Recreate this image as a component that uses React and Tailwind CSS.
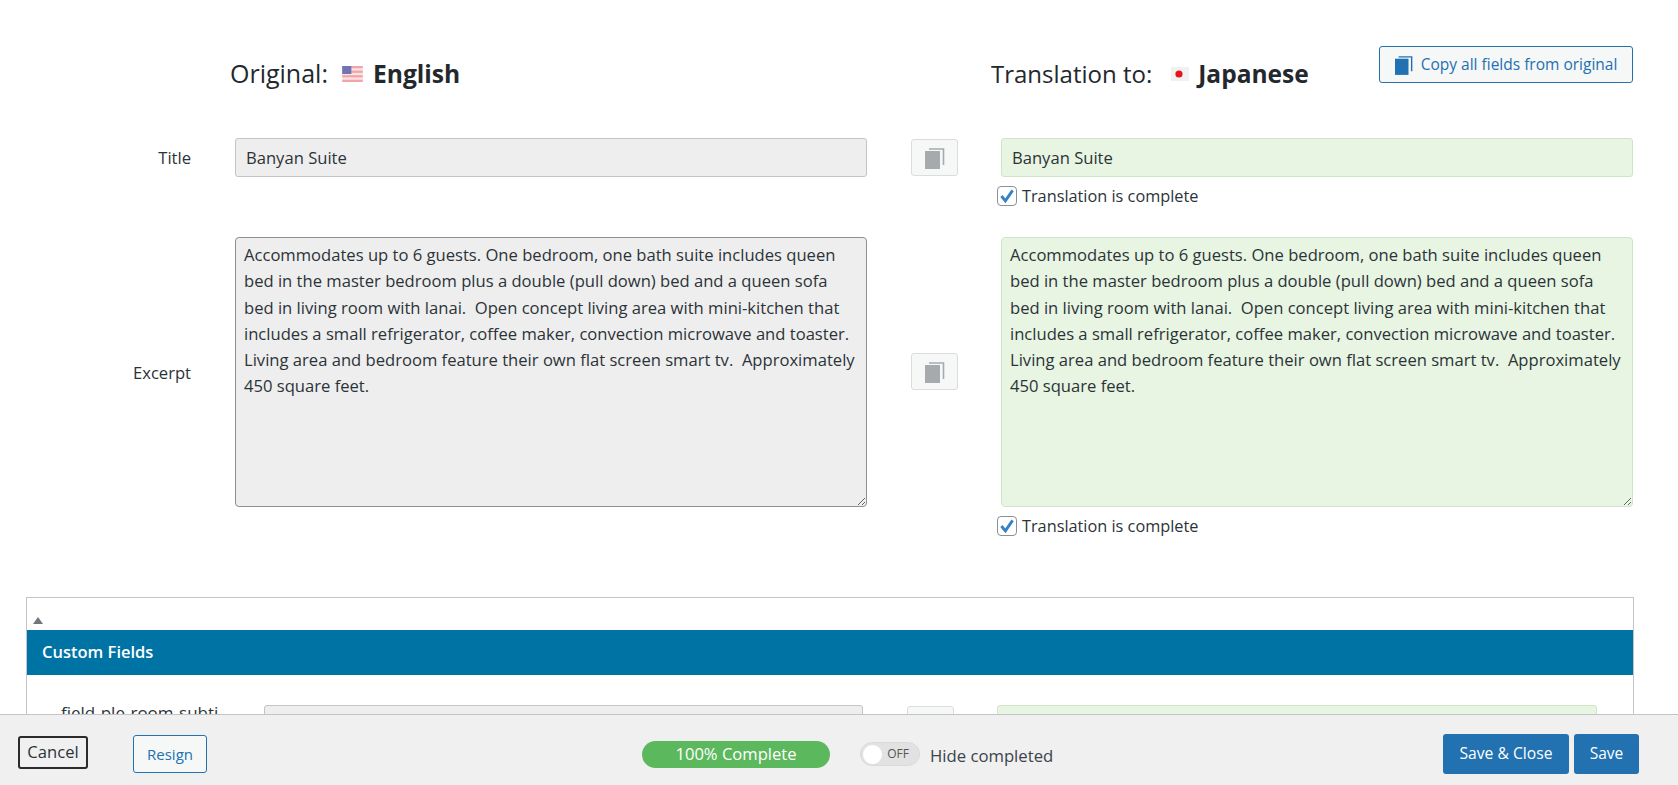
import React from "react";

const excerpt =
  "Accommodates up to 6 guests. One bedroom, one bath suite includes queen bed in the master bedroom plus a double (pull down) bed and a queen sofa bed in living room with lanai.  Open concept living area with mini-kitchen that includes a small refrigerator, coffee maker, convection microwave and toaster. Living area and bedroom feature their own flat screen smart tv.  Approximately 450 square feet.";

const CopyIcon = ({ color = "#a7aaad", className = "w-[20px] h-[22px]" }) => (
  <svg viewBox="0 0 20 22" className={className}>
    <rect x="0" y="4" width="15" height="18" fill={color} />
    <path d="M4 2 H18.5 V18" fill="none" stroke={color} strokeWidth="1.6" />
  </svg>
);

const UsFlag = () => (
  <svg viewBox="0 0 18 14" className="w-[25px] h-[16px]">
    <rect width="18" height="14" fill="#fbe3e3" />
    <rect y="0" width="18" height="2" fill="#f2a5a9" />
    <rect y="4" width="18" height="2" fill="#f2a5a9" />
    <rect y="8" width="18" height="2" fill="#f2a5a9" />
    <rect y="12" width="18" height="2" fill="#f2a5a9" />
    <rect width="8" height="7" fill="#6f74b4" />
  </svg>
);

const JpFlag = () => (
  <svg viewBox="0 0 18 14" className="w-[18px] h-[14px]">
    <rect width="18" height="14" fill="#f1f1f1" />
    <circle cx="8" cy="7" r="3.6" fill="#e8131b" />
  </svg>
);

const CompleteCheck = () => (
  <label className="flex items-center gap-[5px] text-[16.3px] leading-[22px] text-[#2c3338]">
    <span className="flex h-[20px] w-[20px] items-center justify-center rounded-[4px] border border-[#8c8f94] bg-white">
      <svg viewBox="0 0 20 20" className="w-[16px] h-[18px]">
        <path d="M3 10 L8 16 L17 3" fill="none" stroke="#3582c4" strokeWidth="3.6" />
      </svg>
    </span>
    Translation is complete
  </label>
);

const CopyButton = () => (
  <button className="flex h-[37px] w-[47px] items-center justify-center rounded-[3px] border border-[#dcdcde] bg-[#f6f7f7]">
    <CopyIcon />
  </button>
);

const App = () => {
  return (
    <div className="relative h-[785px] overflow-hidden bg-white text-[#2c3338] font-['Open_Sans','Noto_Sans',sans-serif]">
      {/* header row */}
      <div className="flex h-[138px] pl-[230px]">
        <h2 className="mt-[56px] flex h-[36px] w-[761px] items-center text-[25px] text-[#23282d]">
          <span>Original:</span>
          <span className="ml-[12px] mr-[8px] flex"><UsFlag /></span>
          <strong className="text-[24.6px] font-bold">English</strong>
        </h2>
        <h2 className="mt-[56px] flex h-[36px] w-[388px] items-center text-[24px] text-[#23282d]">
          <span>Translation to:</span>
          <span className="ml-[19px] mr-[9px] flex"><JpFlag /></span>
          <strong className="text-[24.5px] font-bold">Japanese</strong>
        </h2>
        <button className="mt-[46px] flex h-[37px] w-[254px] items-center justify-center gap-[8px] rounded-[3px] border border-[#2271b1] bg-[#f6f7f7] text-[15.5px] text-[#2271b1]">
          <CopyIcon color="#2271b1" className="w-[18px] h-[22px]" />
          Copy all fields from original
        </button>
      </div>

      {/* title */}
      <div className="flex h-[99px] items-start">
        <div className="w-[191px] pt-[8px] text-right text-[16.6px]">Title</div>
        <input
          readOnly
          value="Banyan Suite"
          className="ml-[44px] h-[39px] w-[632px] rounded-[3px] border border-[#c3c4c7] bg-[#eeeeee] px-[10px] text-[16.6px] outline-none"
        />
        <div className="ml-[44px] mt-[1px]"><CopyButton /></div>
        <div className="ml-[39px] flex w-[636px] flex-col">
          <input
            readOnly
            value="Banyan Suite"
            className="ml-[4px] h-[39px] w-[632px] rounded-[3px] border border-[#d0e4c8] bg-[#e7f5e2] px-[10px] text-[16.6px] outline-none"
          />
          <div className="mt-[8px]"><CompleteCheck /></div>
        </div>
      </div>

      {/* excerpt */}
      <div className="flex h-[360px] items-start">
        <div className="w-[191px] pt-[124px] text-right text-[16.6px]">Excerpt</div>
        <textarea
          readOnly
          defaultValue={excerpt}
          className="ml-[44px] h-[270px] w-[632px] rounded-[4px] border border-[#8c8f94] bg-[#eeeeee] px-[8px] py-[4px] text-[16.6px] leading-[26.3px] outline-none"
        />
        <div className="ml-[44px] mt-[116px]"><CopyButton /></div>
        <div className="ml-[39px] flex w-[636px] flex-col">
          <textarea
            readOnly
            defaultValue={excerpt}
            className="ml-[4px] h-[270px] w-[632px] rounded-[4px] border border-[#d0e4c8] bg-[#e7f5e2] px-[8px] py-[4px] text-[16.6px] leading-[26.3px] outline-none"
          />
          <div className="mt-[8px]"><CompleteCheck /></div>
        </div>
      </div>

      {/* custom fields box */}
      <div className="ml-[26px] w-[1608px] border border-[#c3c4c7]">
        <div className="flex h-[32px] items-end pb-[6px] pl-[6px]">
          <span className="h-0 w-0 border-x-[5px] border-b-[7px] border-x-transparent border-b-[#72777c]" />
        </div>
        <div className="flex h-[45px] items-center bg-[#0073a5] pl-[15px] text-[16.5px] font-semibold text-white">
          Custom Fields
        </div>
        <div className="flex h-[100px] items-start pt-[30px]">
          <div className="ml-[34px] mt-[-5px] w-[170px] text-[17px]">field-ple-room-subti</div>
          <div className="ml-[33px] h-[39px] w-[599px] rounded-[3px] border border-[#c3c4c7] bg-[#eeeeee]" />
          <div className="ml-[44px] mt-[1px]"><CopyButton /></div>
          <div className="ml-[43px] h-[39px] w-[600px] rounded-[3px] border border-[#d0e4c8] bg-[#e7f5e2]" />
        </div>
      </div>

      {/* footer */}
      <div className="absolute bottom-0 left-0 right-0 flex h-[71px] items-center border-t border-[#c3c4c7] bg-[#f0f0f0] pt-[8px]">
        <button className="ml-[18px] mb-[4px] h-[33px] w-[70px] rounded-[3px] border-2 border-[#2b2b2b] bg-[#f0f0f0] text-[16.6px]">
          Cancel
        </button>
        <button className="ml-[45px] h-[38px] w-[74px] rounded-[3px] border border-[#2271b1] bg-[#f6f7f7] text-[15px] text-[#2271b1]">
          Resign
        </button>
        <div className="ml-[435px] flex h-[27px] w-[188px] items-center justify-center rounded-full bg-[#5cb85c] text-[16.6px] text-white">
          100% Complete
        </div>
        <div className="ml-[30px] flex h-[24px] w-[60px] items-center justify-between rounded-full border border-[#dadada] bg-[#e2e2e2] pl-[2px] pr-[10px] text-[12px] text-[#555555]">
          <span className="h-[19px] w-[19px] rounded-full bg-white" />
          OFF
        </div>
        <span className="ml-[10px] mt-[3px] text-[16.7px] text-[#3c434a]">Hide completed</span>
        <button className="ml-auto h-[40px] w-[126px] rounded-[3px] bg-[#2271b1] text-[15.7px] text-white">
          Save &amp; Close
        </button>
        <button className="ml-[5px] mr-[39px] h-[40px] w-[65px] rounded-[3px] bg-[#2271b1] text-[15.5px] text-white">
          Save
        </button>
      </div>
    </div>
  );
};

export default App;
